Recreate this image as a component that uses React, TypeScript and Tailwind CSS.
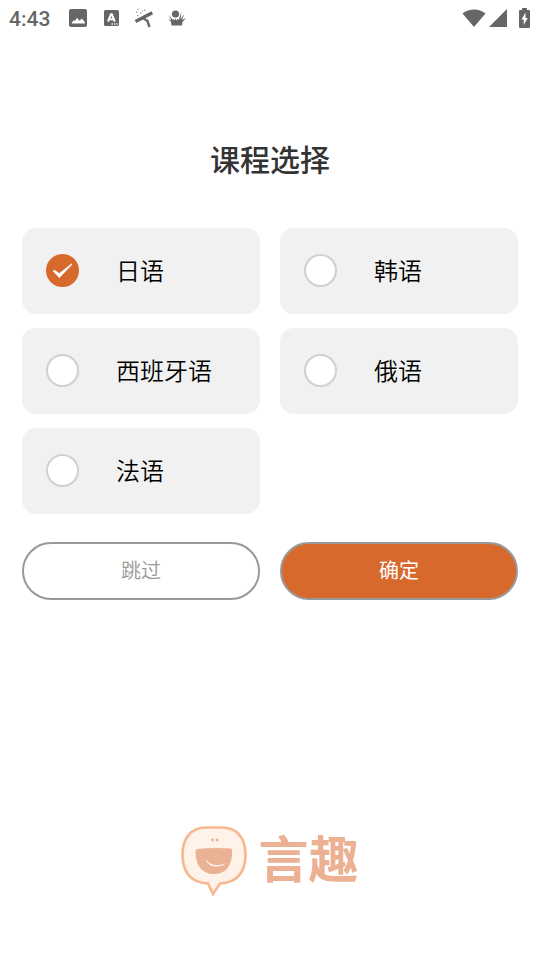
import { useState } from "react";

const courses = ["日语", "韩语", "西班牙语", "俄语", "法语"];

function StatusBar() {
  return (
    <header className="flex h-9 items-center justify-between pr-[10px] pl-[9px] text-[#666666]">
      <div className="flex items-center">
        <span className="w-[60px] pt-0.5 font-['Roboto',sans-serif] text-[21px] leading-9 font-medium">4:43</span>
        <svg className="mr-[17px] h-[18px] w-[18px]" viewBox="0 0 18 18" fill="currentColor" aria-hidden="true">
          <path
            fillRule="evenodd"
            d="M2 0h14a2 2 0 0 1 2 2v14a2 2 0 0 1-2 2H2a2 2 0 0 1-2-2V2a2 2 0 0 1 2-2zM2.500 14.500h13.500l-.500-2-2.800-3-2.200 2.300-2.500-3L5.800 12l-1.300-.800z"
          />
        </svg>
        <svg className="mr-[15px] h-4 w-[15px]" viewBox="0 0 15 16" aria-hidden="true">
          <rect width="15" height="16" rx="1.500" fill="currentColor" />
          <path d="M4 11.500 7 4.300h.800L10.800 11.500M5.200 9.200h4.400" fill="none" stroke="white" strokeWidth="2" />
          <path d="M7.500 14h1.300M9.900 14h1.300M12.300 14h1.300" stroke="white" strokeWidth="1.300" />
        </svg>
        <svg className="mr-[14px] h-5 w-5" viewBox="0 0 20 20" aria-hidden="true">
          <path d="M1.500 13.500 18.300 4.700" fill="none" stroke="currentColor" strokeWidth="3.400" />
          <path d="m9.500 10.500 4 2.500 2 6" fill="none" stroke="currentColor" strokeWidth="2.400" />
          <path
            d="M3.500.800h1.300v1.300H3.500zM10 1.500h1.300v1.300H10zM2 3.500h1.300v1.300H2zM6 4.500h1.300v1.300H6zM3 7h1.300v1.300H3zM8 2.800h1v1H8z"
            fill="currentColor"
            fillOpacity="0.7"
          />
        </svg>
        <svg className="h-4 w-[18px]" viewBox="0 0 18 16" fill="currentColor" aria-hidden="true">
          <circle cx="7.500" cy="4" r="3.600" />
          <path d="M3.500 15.500 3 11.500 0 9l3.200 1.300L1 5l3.800 5L5 8.500l1.500 2 1-2 1 2 1.500-2 .500 1.700L13.500 1.500l-1 8L16.500 3.500l-2.500 6.500L18 8l-3.500 4-.500 3.500z" />
        </svg>
      </div>
      <div className="flex items-center">
        <svg className="mr-[3px] h-[18px] w-6" viewBox="0 0 24 18" fill="currentColor" aria-hidden="true">
          <path d="M.500 4.500C7-1 17-1 23.500 4.500L12 18z" />
        </svg>
        <svg className="mr-3 h-[18px] w-[18px]" viewBox="0 0 18 18" fill="currentColor" aria-hidden="true">
          <path d="M18 0v18H0z" />
        </svg>
        <svg className="h-5 w-[11px]" viewBox="0 0 11 20" aria-hidden="true">
          <path
            d="M3 0h5v2h2a1 1 0 0 1 1 1v16a1 1 0 0 1-1 1H1a1 1 0 0 1-1-1V3a1 1 0 0 1 1-1h2z"
            fill="currentColor"
          />
          <path d="M6.500 4.500 2.500 11.500h2.200V17l4-7H6.500z" fill="white" />
        </svg>
      </div>
    </header>
  );
}

type CourseOptionProps = {
  label: string;
  checked: boolean;
  onSelect: () => void;
};

function CourseOption({ label, checked, onSelect }: CourseOptionProps) {
  return (
    <label className="flex h-[86px] cursor-pointer items-center rounded-[14px] bg-[#f1f1f1] pb-0.5 pl-6">
      <span className="mr-[37px] grid h-[33px] w-[33px] shrink-0 place-items-center">
        <input
          type="radio"
          name="course"
          value={label}
          checked={checked}
          onChange={onSelect}
          className="col-start-1 row-start-1 h-[33px] w-[33px] appearance-none rounded-full border-2 border-[#d0d0d0] bg-white checked:border-[#d8692c] checked:bg-[#d8692c]"
        />
        {checked && (
          <svg
            className="pointer-events-none z-10 col-start-1 row-start-1 h-[33px] w-[33px]"
            viewBox="0 0 33 33"
            aria-hidden="true"
          >
            <path d="M6.800 17 8.500 15.800l4.800 3.400L25.500 9.500l.800 1L13.300 24z" fill="white" />
          </svg>
        )}
      </span>
      <span className="text-2xl font-[350] text-black">{label}</span>
    </label>
  );
}

function Brand() {
  return (
    <footer className="flex items-start justify-center gap-3 pr-px">
      <svg className="h-[70px] w-[66px]" viewBox="0 0 66 70" aria-hidden="true">
        <path
          d="M25 1.500h16C56 1.500 64.500 12 64.500 29S56 57 39 57.500L32 68l-5-10.500C10 57 1.500 46 1.500 29S10 1.500 25 1.500z"
          fill="#fef2e9"
          stroke="#f7b88f"
          strokeWidth="2.700"
        />
        <circle cx="31.500" cy="14" r="1.400" fill="#ebb193" />
        <circle cx="36" cy="14" r="1.400" fill="#ebb193" />
        <path
          d="M16 23Q33 21.500 49.500 22.500q1.700 0 1.700 2.500c0 15-6.500 23-18.200 23-11.500 0-18.500-8-18.500-22q0-2.500 1.500-3z"
          fill="#ebb193"
        />
        <path d="M25 34c4 5.500 11 7 18.500 4C36 42 28 40.500 25 34z" fill="white" stroke="white" strokeWidth="0.500" />
      </svg>
      <span className="text-[50px] leading-[60px] font-bold text-[#ecb192]">言趣</span>
    </footer>
  );
}

export default function App() {
  const [selected, setSelected] = useState("日语");

  return (
    <div className="flex min-h-screen flex-col bg-white font-['Noto_Sans_CJK_SC',sans-serif]">
      <StatusBar />
      <main className="px-[22px] pt-[102px]">
        <h1 className="text-center text-[30px] leading-10 font-medium text-[#333333]">课程选择</h1>
        <div role="radiogroup" aria-label="课程选择" className="mt-[50px] grid grid-cols-2 gap-x-5 gap-y-[14px]">
          {courses.map((course) => (
            <CourseOption
              key={course}
              label={course}
              checked={course === selected}
              onSelect={() => setSelected(course)}
            />
          ))}
        </div>
        <div className="mt-7 grid grid-cols-2 gap-5">
          <button type="button" className="h-[58px] rounded-full border-2 border-[#999999] bg-white pb-0.5 text-xl font-[350] text-[#999999]">
            跳过
          </button>
          <button type="button" className="h-[58px] rounded-full border-2 border-[#999999] bg-[#d8692c] pb-0.5 text-xl text-white">
            确定
          </button>
        </div>
      </main>
      <div className="mt-auto pt-10 pb-16">
        <Brand />
      </div>
    </div>
  );
}
